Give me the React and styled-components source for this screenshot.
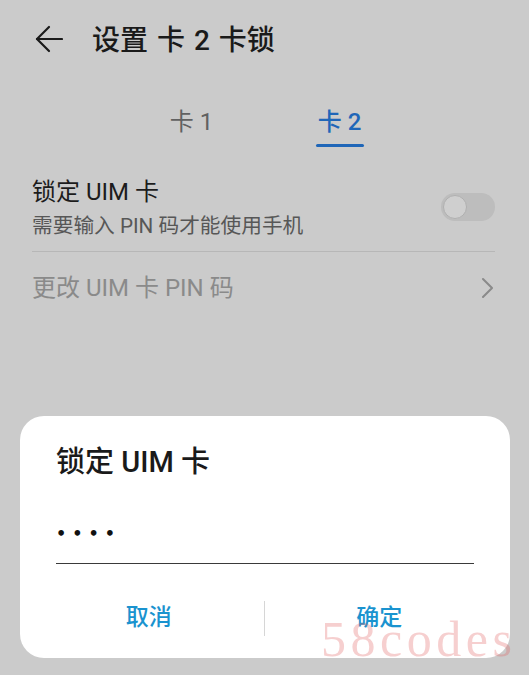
import React from 'react';
import styled, { createGlobalStyle } from 'styled-components';

const GlobalStyle = createGlobalStyle`
  html, body {
    margin: 0;
    padding: 0;
    background: #cbcbcb;
  }
  body {
    font-family: Roboto, "Noto Sans CJK SC", sans-serif;
  }
`;

const Page = styled.div`
  position: relative;
  width: 529px;
  height: 675px;
  overflow: hidden;
  background: #cbcbcb;
  display: flex;
  flex-direction: column;
`;

const Header = styled.div`
  height: 76px;
  display: flex;
  align-items: center;
  padding-left: 35px;
  gap: 29px;
`;

const BackButton = styled.div`
  width: 28px;
  height: 28px;
  display: flex;
  margin-top: 2px;
`;

const Title = styled.h1`
  margin: 0;
  font-size: 28px;
  font-weight: 500;
  color: #1a1a1a;
  word-spacing: 2px;
`;

const Tabs = styled.div`
  height: 74px;
  display: flex;
  justify-content: center;
  gap: 100px;
  padding-left: 2px;
`;

const Tab = styled.div`
  display: flex;
  flex-direction: column;
  align-items: center;
  padding-top: 32px;
  font-size: 24px;
  line-height: 28px;
  color: ${p => (p.active ? '#1f66b8' : '#616161')};
  font-weight: ${p => (p.active ? 500 : 400)};
`;

const TabBar = styled.div`
  margin-top: 8px;
  width: 48px;
  height: 3px;
  border-radius: 2px;
  background: ${p => (p.active ? '#1f66b8' : 'transparent')};
`;

const SwitchRow = styled.div`
  margin: 0 34px 0 32px;
  padding: 28px 0 12px;
  display: flex;
  align-items: flex-start;
  justify-content: space-between;
  border-bottom: 1px solid #b7b7b7;
`;

const RowText = styled.div`
  display: flex;
  flex-direction: column;
  gap: 7px;
`;

const RowTitle = styled.div`
  font-size: 24px;
  line-height: 28px;
  color: ${p => (p.muted ? '#8a8a8a' : '#1c1c1c')};
`;

const RowSub = styled.div`
  font-size: 20.7px;
  line-height: 26px;
  color: #575757;
`;

const Toggle = styled.div`
  width: 54px;
  height: 28px;
  margin-top: 15px;
  border-radius: 14px;
  background: #bdbdbd;
  display: flex;
  align-items: center;
  padding-left: 2px;
  box-sizing: border-box;
`;

const Knob = styled.div`
  width: 22px;
  height: 22px;
  border-radius: 50%;
  background: #cfcfcf;
  border: 1.5px solid #b0b0b0;
`;

const LinkRow = styled.div`
  margin: 0 36px 0 32px;
  padding-top: 22px;
  display: flex;
  align-items: center;
  justify-content: space-between;
`;

const Dialog = styled.div`
  margin: 114px 19px 0 20px;
  height: 242px;
  box-sizing: border-box;
  background: #ffffff;
  border-radius: 24px;
  padding: 30px 0 22px;
  display: flex;
  flex-direction: column;
`;

const DialogTitle = styled.div`
  padding-left: 36px;
  font-size: 29px;
  line-height: 32px;
  font-weight: 500;
  color: #1a1a1a;
`;

const Field = styled.div`
  margin: 41px 36px 0;
  padding: 0 0 14px 0;
  border-bottom: 1px solid #3a3a3a;
  font-family: "DejaVu Sans", sans-serif;
  font-size: 16px;
  font-weight: 700;
  line-height: 30px;
  letter-spacing: 6px;
  color: #111;
`;

const Actions = styled.div`
  margin-top: 36px;
  height: 36px;
  padding: 0 16px 0 14px;
  display: flex;
  align-items: center;
`;

const ActionButton = styled.div`
  flex: 1;
  text-align: center;
  font-size: 23px;
  line-height: 36px;
  color: #1a93cf;
  font-weight: 500;
`;

const ActionDivider = styled.div`
  width: 1px;
  height: 35px;
  background: #d6d6d6;
`;

const Watermark = styled.div`
  position: absolute;
  left: 321px;
  top: 614px;
  font-family: "Liberation Serif", serif;
  font-size: 50px;
  line-height: 1;
  letter-spacing: 4.5px;
  color: rgba(224, 96, 96, 0.3);
  pointer-events: none;
`;

export default function App() {
  return (
    <Page>
      <GlobalStyle />
      <Header>
        <BackButton>
          <svg width="28" height="28" viewBox="0 0 28 28" fill="none" stroke="#1a1a1a" strokeWidth="2.2" strokeLinecap="round" strokeLinejoin="round">
            <path d="M27 14H2" />
            <path d="M14 2L2 14l12 12" />
          </svg>
        </BackButton>
        <Title>设置 卡 2 卡锁</Title>
      </Header>

      <Tabs>
        <Tab>
          卡 1
          <TabBar />
        </Tab>
        <Tab active>
          卡 2
          <TabBar active />
        </Tab>
      </Tabs>

      <SwitchRow>
        <RowText>
          <RowTitle>锁定 UIM 卡</RowTitle>
          <RowSub>需要输入 PIN 码才能使用手机</RowSub>
        </RowText>
        <Toggle>
          <Knob />
        </Toggle>
      </SwitchRow>

      <LinkRow>
        <RowTitle muted>更改 UIM 卡 PIN 码</RowTitle>
        <svg width="12" height="22" viewBox="0 0 12 22" fill="none" stroke="#8a8a8a" strokeWidth="2" strokeLinecap="round" strokeLinejoin="round">
          <path d="M2 2l9 9-9 9" />
        </svg>
      </LinkRow>

      <Dialog>
        <DialogTitle>锁定 UIM 卡</DialogTitle>
        <Field>••••</Field>
        <Actions>
          <ActionButton>取消</ActionButton>
          <ActionDivider />
          <ActionButton>确定</ActionButton>
        </Actions>
      </Dialog>

      <Watermark>58codes</Watermark>
    </Page>
  );
}
